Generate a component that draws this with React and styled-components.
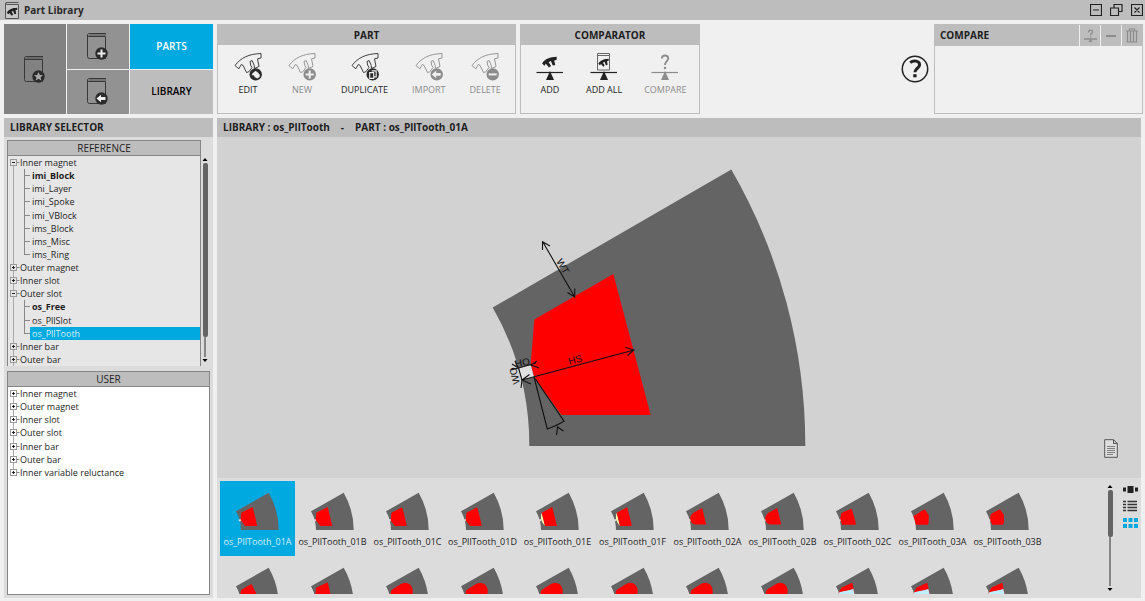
import React from "react";
import styled, { createGlobalStyle, css } from "styled-components";

const c = {
  bar: "#bdbdbd",
  page: "#f0f0f0",
  panel: "#dcdcdc",
  canvas: "#d2d2d2",
  iron: "#646464",
  accent: "#00a9e0",
  ink: "#1e1e1e",
  muted: "#8c8c8c",
  edge: "#868686",
};

const GlobalStyle = createGlobalStyle`
  * { box-sizing: border-box; }
  body { margin: 0; background: ${c.page}; color: ${c.ink}; font: 9px/13px "Open Sans", "Noto Sans", sans-serif; }
  button { font: inherit; color: inherit; background: none; border: 0; padding: 0; margin: 0; }
  h1, h2, h3 { margin: 0; font: inherit; }
  ul { list-style: none; margin: 0; padding: 0; }
  svg { display: block; flex: none; }
`;

const Page = styled.div`
  height: 100vh;
  min-height: 480px;
  display: flex;
  flex-direction: column;
`;
const TitleBar = styled.header`
  height: 20px;
  flex: none;
  display: flex;
  align-items: center;
  gap: 5px;
  padding: 0 2px 0 5px;
  background: ${c.bar};
`;
const Title = styled.h1`
  flex: 1;
  color: #2a2a2a;
  font-size: 10px;
  font-weight: 700;
`;
const WindowButtons = styled.div`
  display: flex;
  gap: 8px;
`;
const Toolbar = styled.div`
  flex: none;
  height: 98px;
  display: flex;
  gap: 4px;
  padding: 4px 2px 4px 4px;
`;
const Switcher = styled.nav`
  width: 209px;
  flex: none;
  display: grid;
  grid-template-columns: 62px 62px 1fr;
  grid-template-rows: 1fr 1fr;
  gap: 1px;
`;
const SwitchButton = styled.button`
  display: flex;
  align-items: center;
  justify-content: center;
  background: ${(p) => p.$bg};
  color: ${(p) => (p.$active ? "#fff" : "#000")};
  font-size: 10px;
  font-weight: 600;
  ${(p) => p.$tall && css`grid-row: span 2;`}
`;
const Group = styled.section`
  width: ${(p) => p.$width};
  flex: none;
  border: 1px solid ${c.bar};
`;
const GroupTitle = styled.h2`
  height: 20px;
  background: ${c.bar};
  text-align: center;
  font-size: 10px;
  line-height: 20px;
  font-weight: 700;
`;
const Tools = styled.div`
  display: flex;
  gap: ${(p) => p.$gap};
  padding: 7px 15px;
`;
const ToolButton = styled.button`
  display: flex;
  flex-direction: column;
  align-items: center;
  gap: 3px;
  line-height: 12px;
  white-space: nowrap;
  &:disabled { color: ${c.muted}; }
`;
const HelpArea = styled.div`
  flex: 1;
  display: flex;
  align-items: center;
  justify-content: flex-end;
  padding-right: 1px;
`;
const CompareHead = styled.div`
  height: 21px;
  display: flex;
  gap: 1px;
`;
const CompareTitle = styled.h2`
  flex: 1;
  background: ${c.bar};
  padding-left: 5px;
  font-size: 10px;
  line-height: 21px;
  font-weight: 700;
`;
const CompareButton = styled.button`
  width: 20px;
  background: ${c.bar};
  display: flex;
  align-items: center;
  justify-content: center;
`;
const Body = styled.main`
  flex: 1;
  min-height: 0;
  display: flex;
  gap: 4px;
  padding: 0 4px 3px;
`;
const Sidebar = styled.aside`
  width: 209px;
  flex: none;
  display: flex;
  flex-direction: column;
  background: ${c.panel};
`;
const SectionHead = styled.h2`
  flex: none;
  height: 19px;
  padding: 0 6px;
  display: flex;
  align-items: center;
  gap: 11px;
  background: ${c.bar};
  font-size: 10px;
  font-weight: 700;
`;
const Lists = styled.div`
  flex: 1;
  min-height: 0;
  display: flex;
  flex-direction: column;
  gap: 5px;
  padding: 3px;
`;
const ReferenceRow = styled.div`
  flex: none;
  height: 226px;
  display: flex;
  gap: 1px;
  padding-right: 2px;
`;
const TreePanel = styled.section`
  flex: 1;
  min-width: 0;
  min-height: 0;
  overflow: hidden;
  border: 2px solid ${c.edge};
  border-width: ${(p) => (p.$open ? "1px 1px 0" : "1px")};
  background: ${(p) => p.$bg};
`;
const TreeTitle = styled.h3`
  height: 15px;
  background: ${c.bar};
  border-bottom: 1px solid ${c.edge};
  text-align: center;
  font-size: 10px;
  line-height: 14px;
`;
const Tree = styled.ul`
  height: ${(p) => p.$height};
  display: flex;
  flex-direction: column;
`;
const TreeItem = styled.li`
  flex: 1;
  min-height: 0;
  display: flex;
`;
const Branch = styled.span`
  width: 12px;
  flex: none;
  display: flex;
  align-items: center;
  padding-left: 2px;
  background: linear-gradient(#aaa, #aaa) 5px ${(p) => (p.$first ? "100%" : "0")} / 1px ${(p) => (p.$first || p.$last ? "50%" : "100%")} no-repeat;
`;
const Twig = styled.span`
  width: 10px;
  flex: none;
  background:
    linear-gradient(#888, #888) 4px 0 / 1px ${(p) => (p.$last ? "50%" : "100%")} no-repeat,
    linear-gradient(#888, #888) 4px 50% / 6px 1px no-repeat;
`;
const TreeButton = styled.button`
  flex: 1;
  text-align: left;
  line-height: 13px;
  white-space: nowrap;
  padding-left: ${(p) => (p.$child ? "2px" : "0")};
  font-weight: ${(p) => (p.$bold ? 700 : 400)};
  ${(p) => p.$selected && css`background: ${c.accent}; color: #d4f1fc;`}
`;
const Scroll = styled.div`
  width: 6px;
  flex: none;
  display: flex;
  flex-direction: column;
  align-items: center;
  gap: 2px;
  padding: ${(p) => p.$pad};
`;
const Rail = styled.div`
  flex: 1;
  width: 5px;
  display: flex;
  flex-direction: column;
  align-items: center;
  &::before { content: ""; width: 5px; height: ${(p) => p.$thumb}; border-radius: 2px; background: ${c.iron}; }
  &::after { content: ""; width: 2px; flex: 1; background: ${c.edge}; }
`;
const Workspace = styled.section`
  flex: 1;
  min-width: 0;
  display: flex;
  flex-direction: column;
`;
const Canvas = styled.div`
  flex: 1;
  min-height: 0;
  position: relative;
  background: ${c.canvas};
  & > svg { width: 100%; height: 100%; }
`;
const NoteButton = styled.button`
  position: absolute;
  right: 23px;
  bottom: 20px;
`;
const Gallery = styled.div`
  flex: none;
  height: 120px;
  display: flex;
  padding: 3px 3px 4px;
  background: ${c.panel};
`;
const Grid = styled.div`
  flex: 1;
  min-width: 0;
  overflow: hidden;
  display: grid;
  grid-template-columns: repeat(11, 75px);
  grid-auto-rows: 75px;
`;
const Tile = styled.button`
  display: flex;
  flex-direction: column;
  align-items: center;
  white-space: nowrap;
  line-height: 18px;
  ${(p) => p.$selected && css`background: ${c.accent}; color: #d4f1fc;`}
`;
const Views = styled.div`
  display: flex;
  flex-direction: column;
  gap: 6px;
  padding: 4px 0 0 10px;
`;

const PART = "M2 13.5C7 5 16 2 28 1.5V6.5L23.7 8 25.5 16 21 17 17.7 9 13.7 11.3 18 18 14.3 20.7 8.7 14 6 17.3Z";
const PART_OUTLINE = "M2 13.5C8 5.5 16 2 28 1.5V6L24.5 6.8 26 14.5 21.5 16.5 21.2 13.5 19.2 8.6 17 9.4 17.6 13 19 15.5 15.8 19.8 13.5 20.5 10 13.3 8.3 12.5 5.8 16.8Z";

const Badge = ({ kind, x, y, color = "#2b2b2b" }) => (
  <g transform={`translate(${x} ${y})`}>
    <circle r="6.2" fill={color} />
    {kind === "plus" && <path d="M-4 0H4M0-4V4" stroke="#f0f0f0" strokeWidth="2" />}
    {kind === "minus" && <path d="M-4 0H4" stroke="#f0f0f0" strokeWidth="2" />}
    {kind === "arrow" && <path d="M-5 0L-.5-3.8V-1.4H4V1.4H-.5V3.8Z" fill="#f0f0f0" />}
    {kind === "star" && <path d="M0-4.6L1.3-1.5 4.5-1.3 2 .8 2.8 4 0 2.2-2.8 4-2 .8-4.5-1.3-1.3-1.5Z" fill="#aaa" />}
    {kind === "copy" && <path d="M-1-3.5H3.5V2.5H1.5M-3-1.8H1V4H-3Z" fill={color} stroke="#f0f0f0" strokeWidth="1.1" />}
    {kind === "edit" && <path d="M-3.8-.5L-.5-3.5 1 -3 4 0V2.5L1.5 4 -1 2.5-1.8.8-3.2 1.2Z" fill="#f0f0f0" />}
  </g>
);

const BookIcon = ({ kind }) => (
  <svg width="22" height="29" viewBox="0 0 22 29" aria-hidden="true">
    <path d="M.5 3V24.5Q.5 26.5 2.5 26.5H18.5V4.5H2Q0 4.5 .5 2.5 1 1.5 2.5 1.5H19" fill="none" stroke="#383838" />
    <path d="M2 3H19" stroke="#484848" strokeWidth=".8" />
    <Badge kind={kind} x="14.5" y="21.5" />
  </svg>
);

const PartIcon = ({ kind, color }) => (
  <svg width="30" height="29" viewBox="0 0 30 29" aria-hidden="true">
    <path d={PART_OUTLINE} fill="none" stroke={color} strokeWidth=".9" />
    <Badge kind={kind} x="22.7" y="22.4" color={color} />
  </svg>
);

const BalanceIcon = ({ kind, color }) => (
  <svg width="28" height="29" viewBox="0 0 28 29" aria-hidden="true">
    <path d="M.5 20.5H27" stroke={color} strokeWidth="1.2" />
    <path d="M14 19L18 28H10Z" fill={color} />
    {kind === "part" && <path d={PART} transform="translate(5 4) scale(.56 .56)" fill={color} />}
    {kind === "book" && (
      <>
        <path d="M7.5 1.5V18H19.5V3.5H8M7.5 1.5H19.5V4" fill="none" stroke="#666" />
        <path d={PART} transform="translate(7.5 6) scale(.4 .42)" fill={color} />
      </>
    )}
    {kind === "question" && (
      <>
        <path d="M10.8 6.5C11 2.5 17.2 2.5 17.2 6.5 17.2 9 14 9.2 14 13" fill="none" stroke={color} strokeWidth="1.8" />
        <circle cx="14" cy="16" r="1.2" fill={color} />
      </>
    )}
  </svg>
);

const AppIcon = () => (
  <svg width="14" height="19" viewBox="0 0 14 19" aria-hidden="true">
    <path d="M.5 2V17.5H13.5V3.5H1.5Q.5 3 1 1.5H13.5" fill="#c8c8c8" stroke="#555" />
    <path d={PART} transform="translate(1 6) scale(.4 .42)" fill={c.ink} />
  </svg>
);

const Arrow = ({ down }) => (
  <svg width="6" height="3" viewBox="0 0 6 3" aria-hidden="true">
    <path d={down ? "M.5 0H5.5L3 3Z" : "M.5 3H5.5L3 0Z"} fill="#000" />
  </svg>
);

const Scrollbar = ({ pad, thumb }) => (
  <Scroll $pad={pad} aria-hidden="true">
    <Arrow />
    <Rail $thumb={thumb} />
    <Arrow down />
  </Scroll>
);

const Expander = ({ open, bg }) => (
  <svg width="10" height="7" viewBox="0 0 10 7" aria-hidden="true">
    <rect x=".5" y=".5" width="6" height="6" fill={bg} stroke="#999" />
    <path d={open ? "M2 3.5H5" : "M2 3.5H5M3.5 2V5"} stroke="#222" />
    <path d="M7 3.5H9.5" stroke="#888" />
  </svg>
);

const reference = [
  { name: "Inner magnet", open: true },
  { name: "imi_Block", child: true, bold: true },
  { name: "imi_Layer", child: true },
  { name: "imi_Spoke", child: true },
  { name: "imi_VBlock", child: true },
  { name: "ims_Block", child: true },
  { name: "ims_Misc", child: true },
  { name: "ims_Ring", child: true, last: true },
  { name: "Outer magnet" },
  { name: "Inner slot" },
  { name: "Outer slot", open: true },
  { name: "os_Free", child: true, bold: true },
  { name: "os_PllSlot", child: true },
  { name: "os_PllTooth", child: true, last: true, selected: true },
  { name: "Inner bar" },
  { name: "Outer bar" },
];
const user = ["Inner magnet", "Outer magnet", "Inner slot", "Outer slot", "Inner bar", "Outer bar", "Inner variable reluctance"].map((name) => ({ name }));

const TreeList = ({ items, height, bg, closed }) => (
  <Tree $height={height}>
    {items.map((item, i) => (
      <TreeItem key={item.name}>
        <Branch $first={i === 0} $last={closed && i === items.length - 1}>
          {!item.child && <Expander open={item.open} bg={bg} />}
        </Branch>
        {item.child && <Twig $last={item.last} />}
        <TreeButton $child={item.child} $bold={item.bold} $selected={item.selected}>{item.name}</TreeButton>
      </TreeItem>
    ))}
  </Tree>
);

const partTools = [
  ["EDIT", "edit", true],
  ["NEW", "plus", false],
  ["DUPLICATE", "copy", true],
  ["IMPORT", "arrow", false],
  ["DELETE", "minus", false],
];
const compareTools = [
  ["ADD", "part", true],
  ["ADD ALL", "book", true],
  ["COMPARE", "question", false],
];

const sharp = "M32.7 26L21.3 31.7 20.7 39 25.3 45H37.3Z";
const soft = "M31 26.8L22 31.5Q21.3 32 21.2 33L20.7 39.5 24.5 44.5Q25 45 26 45H35.5Q37 45 36.6 43.5L32.6 27.5Q32.2 26 31 26.8Z";
const liner = "M32.3 26L21.7 31.7 25 45H37Z";
const linerSoft = "M31 26.8L21.7 31.7 25 45H35.5Q37 45 36.6 43.5L32.6 27.5Q32.2 26 31 26.8Z";
const round = "M31.2 27.5L23.5 31.8C18.5 35 19.5 42.5 25 43.5H36.2L32.5 28Q32 27 31.2 27.5Z";
const bulb = "M20.7 39V36Q20.7 34 23 33L31 28Q36 25.5 40 28.5C44 32 43.5 40 39.5 42L24 44Z";
const split = "M32.3 26.7L21.5 31.5 18.5 37 22 45H36Z";
const tiles = [
  { name: "os_PllTooth_01A", shape: sharp },
  { name: "os_PllTooth_01B", shape: sharp },
  { name: "os_PllTooth_01C", shape: soft },
  { name: "os_PllTooth_01D", shape: soft },
  { name: "os_PllTooth_01E", shape: liner, extra: "liner" },
  { name: "os_PllTooth_01F", shape: linerSoft, extra: "liner" },
  { name: "os_PllTooth_02A", shape: round },
  { name: "os_PllTooth_02B", shape: round },
  { name: "os_PllTooth_02C", shape: "M30.5 28L22 31.7Q21 32.2 21 33.5L20.3 38 22 43.7H35Q36.2 43.5 36 42.5L32 28.5Q31.6 27.4 30.5 28Z" },
  { name: "os_PllTooth_03A", shape: "M29.7 28.3L18.3 35 21 43.7H32.5L33.7 42V34Z" },
  { name: "os_PllTooth_03B", shape: "M30 28.3L22 32.3 20.3 34 20.3 40 22.5 43.7H32.7L34 42V34Z" },
  { shape: "M31.5 28L21.5 33.5 20.5 36V44H36V37Z" },
  { shape: "M32.7 26.3L21 31.7 20.5 38V45H37.3Z" },
  { shape: bulb },
  { shape: bulb },
  { shape: bulb },
  { shape: bulb },
  { shape: bulb },
  { shape: bulb },
  { shape: split, extra: "split" },
  { shape: split, extra: "split" },
  { shape: split, extra: "split" },
];

const Thumb = ({ shape, extra }) => (
  <svg width="75" height="52" viewBox="0 0 75 52" aria-hidden="true">
    <path d="M16 30.3L48.7 11.7A75.4 75.4 0 0 1 58.7 49H21A37.7 37.7 0 0 0 16 30.3Z" fill={c.iron} />
    <path d="M18.5 38.5L21.5 38V40L19.2 40.5Z" fill={c.panel} />
    {extra === "liner" && <path d="M21.7 31.7Q19 38.5 25 45Z" fill="#ffffb0" />}
    <path d={shape} fill="#f00" />
    {extra === "split" && <path d="M18.5 36.8C24 34.3 29 35 33.3 32.8L35 40H20Z" fill="#bfefff" />}
  </svg>
);

const PartDrawing = () => (
  <svg viewBox="217 137 924 341" role="img" aria-label="os_PllTooth_01A">
    <path d="M492.7 307.5L731.3 169.5A552 552 0 0 1 805.3 446H529.3A276 276 0 0 0 492.7 307.5Z" fill={c.iron} />
    <path d="M613.3 274L534.3 319.5 530.7 364 534 377 561.5 415H650.7Z" fill="#f00" />
    <path d="M518.5 368L530.7 365 534 377 522 380Z" fill="#e0e0e0" />
    <g fill="none" stroke="#111" strokeWidth="1.1">
      <path d="M542.7 241.7L574.7 297M542.5 250V241.7L550 246M567.5 292.5L574.7 297V288.5" />
      <path d="M522 380L634 350M625.5 347.5L634 350 627.5 355.5M529.5 374.5L522 380 531 384" />
      <path d="M518.5 368L522 380 521 388M511 370L518.5 368 536 363M512 364L518.5 368 515 361M537 361L531 365 539 368" />
      <path d="M534 377L547.3 429Q556 426 564 421.2Z" fill={c.iron} />
      <path d="M556.5 435L557.5 427 563.5 431" />
    </g>
    <g fill="#111" fontFamily="Liberation Sans, Arial, sans-serif" fontSize="10" textAnchor="middle">
      <text transform="translate(560 268) rotate(60)">WT</text>
      <text transform="translate(576 363) rotate(-14)">HS</text>
      <text transform="translate(523 366) rotate(-10)">HO</text>
      <text transform="translate(518 375) rotate(-104)">WO</text>
    </g>
  </svg>
);

export default function App() {
  return (
    <Page>
      <GlobalStyle />
      <TitleBar>
        <AppIcon />
        <Title>Part Library</Title>
        <WindowButtons>
          <button aria-label="Minimize">
            <svg width="12" height="12" viewBox="0 0 12 12"><path d="M.5.5H11.5V11.5H.5ZM3 6H9" fill="none" stroke="#222" strokeWidth="1.2" /></svg>
          </button>
          <button aria-label="Restore">
            <svg width="13" height="12" viewBox="0 0 13 12"><path d="M.5 4H8.5V11.5H.5ZM4 4V.5H12V7.5H8.5" fill="none" stroke="#222" strokeWidth="1.2" /></svg>
          </button>
          <button aria-label="Close">
            <svg width="12" height="12" viewBox="0 0 12 12"><path d="M.5.5H11.5V11.5H.5ZM3.5 3.5L8.5 8.5M8.5 3.5L3.5 8.5" fill="none" stroke="#222" strokeWidth="1.2" /></svg>
          </button>
        </WindowButtons>
      </TitleBar>

      <Toolbar>
        <Switcher>
          <SwitchButton $tall $bg="#828282" aria-label="Favorite library"><BookIcon kind="star" /></SwitchButton>
          <SwitchButton $bg="#929292" aria-label="New library"><BookIcon kind="plus" /></SwitchButton>
          <SwitchButton $bg={c.accent} $active>PARTS</SwitchButton>
          <SwitchButton $bg="#929292" aria-label="Import library"><BookIcon kind="arrow" /></SwitchButton>
          <SwitchButton $bg={c.bar}>LIBRARY</SwitchButton>
        </Switcher>
        <Group $width="299px">
          <GroupTitle>PART</GroupTitle>
          <Tools $gap="24px">
            {partTools.map(([label, kind, on]) => (
              <ToolButton key={label} disabled={!on}>
                <PartIcon kind={kind} color={on ? "#2b2b2b" : c.muted} />
                {label}
              </ToolButton>
            ))}
          </Tools>
        </Group>
        <Group $width="180px">
          <GroupTitle>COMPARATOR</GroupTitle>
          <Tools $gap="22px">
            {compareTools.map(([label, kind, on]) => (
              <ToolButton key={label} disabled={!on}>
                <BalanceIcon kind={kind} color={on ? "#222" : c.muted} />
                {label}
              </ToolButton>
            ))}
          </Tools>
        </Group>
        <HelpArea>
          <button aria-label="Help">
            <svg width="28" height="28" viewBox="0 0 28 28">
              <circle cx="14" cy="14" r="12.7" fill="none" stroke="#222" strokeWidth="1.5" />
              <path d="M9.2 7.6C12.5 4.9 18.6 5.6 18.6 9.8 18.6 13.4 14 13.2 13.9 17.3" fill="none" stroke="#222" strokeWidth="3" />
              <path d="M12.2 19.2H15.6V22.3H12.2Z" fill="#222" />
            </svg>
          </button>
        </HelpArea>
        <Group $width="209px">
          <CompareHead>
            <CompareTitle>COMPARE</CompareTitle>
            <CompareButton aria-label="Compare selected">
              <svg width="13" height="14" viewBox="0 0 13 14"><path d="M4.5 3.5C4.5.5 8.5.5 8.5 3 8.5 4.7 6.5 4.5 6.5 6.5M6.5 7.5V8.5M0 10H13" fill="none" stroke={c.muted} strokeWidth="1.3" /><path d="M6.5 9.5L8.5 13H4.5Z" fill={c.muted} /></svg>
            </CompareButton>
            <CompareButton aria-label="Remove">
              <svg width="10" height="12" viewBox="0 0 10 12"><path d="M0 6H10" stroke={c.muted} strokeWidth="2" /></svg>
            </CompareButton>
            <CompareButton aria-label="Delete all">
              <svg width="12" height="15" viewBox="0 0 12 15"><path d="M1.5 3V14H10.5V3M4.5 3V14M7.5 3V14M0 3H12M3.5 2.5V1H8.5V2.5" fill="none" stroke={c.muted} strokeWidth="1.2" /></svg>
            </CompareButton>
          </CompareHead>
        </Group>
      </Toolbar>

      <Body>
        <Sidebar>
          <SectionHead>LIBRARY SELECTOR</SectionHead>
          <Lists>
            <ReferenceRow>
              <TreePanel $open $bg="#e6e6e6">
                <TreeTitle>REFERENCE</TreeTitle>
                <TreeList items={reference} height="210px" bg="#e6e6e6" />
              </TreePanel>
              <Scrollbar pad="18px 0 4px" thumb="174px" />
            </ReferenceRow>
            <TreePanel $bg="#fff">
              <TreeTitle>USER</TreeTitle>
              <TreeList items={user} height="92px" bg="#fff" closed />
            </TreePanel>
          </Lists>
        </Sidebar>

        <Workspace>
          <SectionHead>
            <span>LIBRARY : os_PllTooth</span>
            <span>-</span>
            <span>PART : os_PllTooth_01A</span>
          </SectionHead>
          <Canvas>
            <PartDrawing />
            <NoteButton aria-label="Part notes">
              <svg width="14" height="19" viewBox="0 0 14 19">
                <path d="M.7.7H9.5L13.3 4.5V18.3H.7ZM9.5.7V4.5H13.3" fill="#dedede" stroke="#555" />
                <path d="M3 7.5H11M3 9.5H11M3 11.5H11M3 13.5H11M3 15.5H9" stroke="#666" strokeWidth=".8" />
              </svg>
            </NoteButton>
          </Canvas>
          <Gallery>
            <Grid>
              {tiles.map(({ name, shape, extra }, i) => (
                <Tile key={i} $selected={i === 0}>
                  <Thumb shape={shape} extra={extra} />
                  {name}
                </Tile>
              ))}
            </Grid>
            <Scrollbar pad="4px 0 3px" thumb="47px" />
            <Views>
              <button aria-label="Carousel view">
                <svg width="15" height="9" viewBox="0 0 15 9"><path d="M0 2.5H3V6.5H0ZM4.5 1H10.5V8H4.5ZM12 2.5H15V6.5H12Z" fill="#222" /></svg>
              </button>
              <button aria-label="List view">
                <svg width="15" height="12" viewBox="0 0 15 12"><path d="M0 1.5H3M4.5 1.5H14M0 4.5H3M4.5 4.5H14M0 7.5H3M4.5 7.5H14M0 10.5H3M4.5 10.5H14" stroke="#333" strokeWidth="1.4" /></svg>
              </button>
              <button aria-label="Grid view">
                <svg width="15" height="10" viewBox="0 0 15 10"><path d="M0 0H4V4H0ZM5.5 0H9.5V4H5.5ZM11 0H15V4H11ZM0 6H4V10H0ZM5.5 6H9.5V10H5.5ZM11 6H15V10H11Z" fill={c.accent} /></svg>
              </button>
            </Views>
          </Gallery>
        </Workspace>
      </Body>
    </Page>
  );
}
